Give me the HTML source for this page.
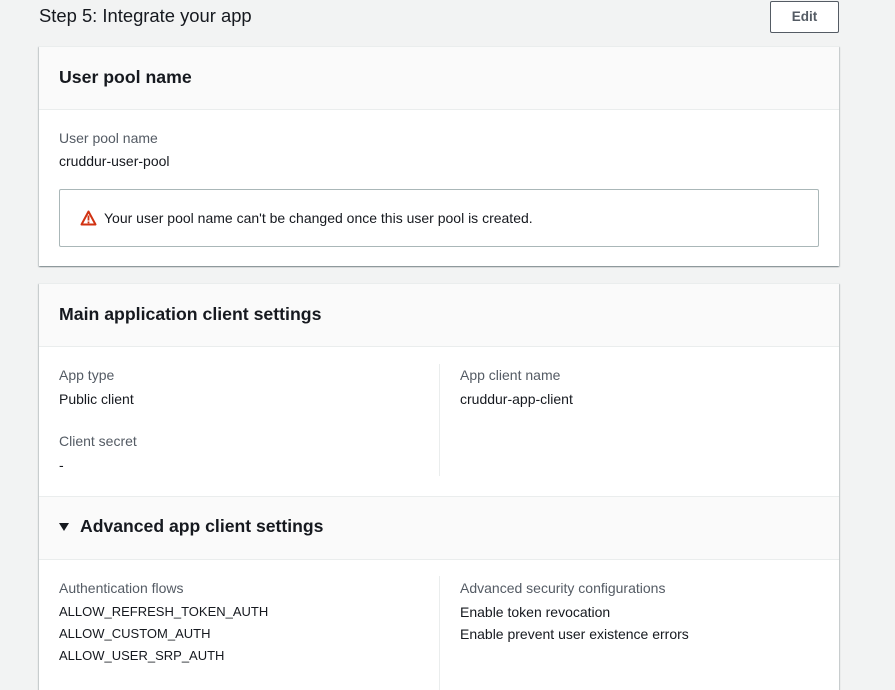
<!DOCTYPE html>
<html><head><meta charset="utf-8"><style>
*{box-sizing:border-box;margin:0;padding:0}
html{width:895px;height:690px;overflow:hidden}
body{width:895px;height:690px;overflow:hidden;background:#f2f3f3;font-family:"Liberation Sans",sans-serif;color:#16191f;position:relative}
.abs{position:absolute}
.card{position:absolute;left:39px;width:800px;background:#fff;box-shadow:0 1px 1px rgba(0,28,36,.3),1px 1px 1px rgba(0,28,36,.15),-1px 1px 1px rgba(0,28,36,.15);border-top:1px solid #eaeded}
.hdr{background:#fafafa;border-bottom:1px solid #eaeded;height:63px;padding-left:20px;font-weight:bold;font-size:17.7px;line-height:60px}
.lbl{position:absolute;font-size:14px;color:#545b64}
.val{position:absolute;font-size:14px;color:#16191f}
.up{font-size:13px}
</style></head><body>
<div class="abs" style="left:39px;top:5px;font-size:18.4px;color:#16191f">Step 5: Integrate your app</div>
<div class="abs" style="left:770px;top:1px;width:69px;height:32px;border:1px solid #545b64;border-radius:2px;background:#fff;font-weight:bold;font-size:13.5px;color:#545b64;text-align:center;line-height:30px">Edit</div>

<div class="card" style="top:46px;height:220px">
  <div class="hdr">User pool name</div>
  <div class="lbl" style="left:20px;top:83px">User pool name</div>
  <div class="val" style="left:20px;top:106px">cruddur-user-pool</div>
  <div class="abs" style="left:20px;top:142px;width:760px;height:58px;border:1px solid #aab7b8;border-radius:2px">
    <svg class="abs" style="left:20px;top:20px" width="17" height="16" viewBox="0 0 17 16"><path d="M8.5 1.5L15.5 14.5H1.5Z" fill="none" stroke="#d13212" stroke-width="2" stroke-linejoin="round"/><rect x="7.6" y="5.5" width="1.8" height="5" fill="#d13212"/><rect x="7.6" y="11.5" width="1.8" height="1.8" fill="#d13212"/></svg>
    <div class="abs" style="left:44px;top:20px;font-size:14px">Your user pool name can't be changed once this user pool is created.</div>
  </div>
</div>

<div class="card" style="top:283px;height:420px">
  <div class="hdr">Main application client settings</div>
  <div class="lbl" style="left:20px;top:83px">App type</div>
  <div class="val" style="left:20px;top:107px">Public client</div>
  <div class="lbl" style="left:20px;top:149px">Client secret</div>
  <div class="val" style="left:20px;top:173px">-</div>
  <div class="abs" style="left:400px;top:80px;width:1px;height:112px;background:#eaeded"></div>
  <div class="lbl" style="left:421px;top:83px">App client name</div>
  <div class="val" style="left:421px;top:107px">cruddur-app-client</div>
  <div class="abs" style="left:0;top:212px;width:800px;height:64px;background:#fafafa;border-top:1px solid #eaeded;border-bottom:1px solid #eaeded">
    <svg class="abs" style="left:20px;top:26px" width="10" height="8" viewBox="0 0 10 8"><path d="M0 0H10L5 8Z" fill="#16191f"/></svg>
    <div class="abs" style="left:41px;top:19px;font-weight:bold;font-size:17.6px">Advanced app client settings</div>
  </div>
  <div class="lbl" style="left:20px;top:296px">Authentication flows</div>
  <div class="val up" style="left:20px;top:320px">ALLOW_REFRESH_TOKEN_AUTH</div>
  <div class="val up" style="left:20px;top:342px">ALLOW_CUSTOM_AUTH</div>
  <div class="val up" style="left:20px;top:364px">ALLOW_USER_SRP_AUTH</div>
  <div class="abs" style="left:400px;top:292px;width:1px;height:130px;background:#eaeded"></div>
  <div class="lbl" style="left:421px;top:296px">Advanced security configurations</div>
  <div class="val" style="left:421px;top:320px">Enable token revocation</div>
  <div class="val" style="left:421px;top:342px">Enable prevent user existence errors</div>
</div>
</body></html>
